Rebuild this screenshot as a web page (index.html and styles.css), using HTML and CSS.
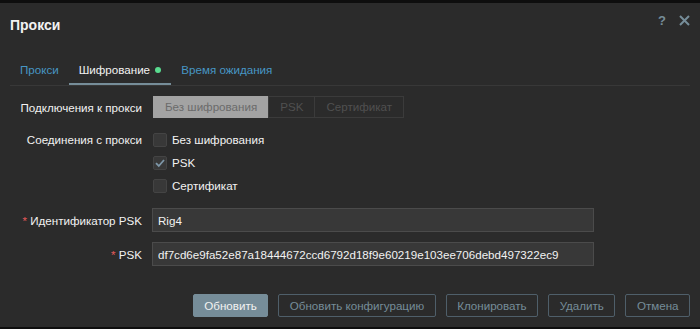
FILE: index.html
```html
<!DOCTYPE html>
<html lang="ru">
<head>
    <meta charset="UTF-8">
    <meta name="viewport" content="width=device-width, initial-scale=1.0">
    <title>Прокси</title>
    <link rel="stylesheet" href="styles.css">
</head>
<body>
    <div class="dialog">
        <div class="dialog-head">
            <h2>Прокси</h2>
            <div class="head-tools">
                <span class="help">?</span>
                <svg class="close" width="11" height="11" viewBox="0 0 11 11">
                    <path d="M1 1 L10 10 M10 1 L1 10" stroke="#768d99" stroke-width="2" fill="none"/>
                </svg>
            </div>
        </div>

        <ul class="tabs">
            <li class="tab">Прокси</li>
            <li class="tab active">Шифрование <span class="dot"></span></li>
            <li class="tab">Время ожидания</li>
        </ul>

        <div class="form">
            <label class="form-label">Подключения к прокси</label>
            <div class="segmented">
                <span class="seg selected">Без шифрования</span>
                <span class="seg">PSK</span>
                <span class="seg">Сертификат</span>
            </div>

            <label class="form-label top">Соединения с прокси</label>
            <ul class="check-list">
                <li><span class="check"></span>Без шифрования</li>
                <li>
                    <span class="check">
                        <svg width="12" height="12" viewBox="0 0 12 12">
                            <path d="M2 6.2 L4.8 9 L10 3" stroke="#7e97a8" stroke-width="1.8" fill="none"/>
                        </svg>
                    </span>PSK
                </li>
                <li><span class="check"></span>Сертификат</li>
            </ul>

            <label class="form-label"><span class="req">*</span> Идентификатор PSK</label>
            <input class="text-input" type="text" value="Rig4">

            <label class="form-label"><span class="req">*</span> PSK</label>
            <input class="text-input" type="text" value="df7cd6e9fa52e87a18444672ccd6792d18f9e60219e103ee706debd497322ec9">
        </div>

        <div class="dialog-foot">
            <button class="btn primary">Обновить</button>
            <button class="btn">Обновить конфигурацию</button>
            <button class="btn">Клонировать</button>
            <button class="btn">Удалить</button>
            <button class="btn">Отмена</button>
        </div>
    </div>
</body>
</html>
```

FILE: styles.css
```css
body {
    margin: 0;
    height: 329px;
    background-color: #0e0e0e;
    font-family: "Liberation Sans", Arial, sans-serif;
    font-size: 11.6px;
    color: #f2f2f2;
    overflow: hidden;
}
.dialog {
    margin-top: 3px;
    height: 324px;
    background-color: #2b2b2b;
    display: flex;
    flex-direction: column;
}
.dialog-head {
    display: flex;
    justify-content: space-between;
    padding: 14px 10px 0;
}
.dialog-head h2 {
    margin: 0;
    font-size: 14px;
    line-height: 16px;
    font-weight: bold;
    color: #f2f2f2;
}
.head-tools {
    display: flex;
    align-items: center;
    gap: 13px;
    margin-top: -5px;
    height: 16px;
}
.help {
    color: #768d99;
    font-size: 13px;
    font-weight: bold;
}
.tabs {
    list-style: none;
    display: flex;
    margin: 21px 10px 0;
    padding: 0;
    border-bottom: 1px solid #383838;
}
.tab {
    padding: 3px 10px 0;
    line-height: 26px;
    border-bottom: 2px solid transparent;
    color: #4796c4;
}
.tab.active {
    color: #f2f2f2;
    border-bottom-color: #768d99;
}
.dot {
    display: inline-block;
    width: 6px;
    height: 6px;
    margin-left: 2px;
    border-radius: 50%;
    background-color: #59db8f;
    vertical-align: 1px;
}
.form {
    display: grid;
    grid-template-columns: 132px 1fr;
    column-gap: 10px;
    row-gap: 10px;
    padding: 10px 10px 0;
    align-items: center;
}
.form-label {
    text-align: right;
    white-space: nowrap;
}
.form-label.top {
    align-self: start;
    line-height: 23px;
}
.req {
    color: #e45959;
}
.segmented {
    display: flex;
    width: max-content;
    margin-left: 1px;
}
.seg {
    height: 20px;
    line-height: 20px;
    padding: 0 11px;
    border: 1px solid #3b3b3b;
    margin-left: -1px;
    color: #505050;
}
.seg:first-child {
    margin-left: 0;
}
.seg.selected {
    background-color: #a3a3a3;
    border-color: #a3a3a3;
    color: #6b6b6b;
}
.check-list {
    list-style: none;
    margin: 0;
    padding: 0 0 1px;
}
.check-list li {
    display: flex;
    align-items: center;
    height: 23px;
}
.check {
    box-sizing: border-box;
    width: 14px;
    height: 14px;
    margin: 0 5px 0 1px;
    border: 1px solid #444;
    border-radius: 2px;
    background-color: #383838;
    display: flex;
    align-items: center;
    justify-content: center;
}
.text-input {
    box-sizing: border-box;
    width: 442px;
    height: 24px;
    padding: 0 5px;
    background-color: #383838;
    border: 1px solid #4b4b4b;
    color: #f2f2f2;
    font-family: inherit;
    font-size: 11.6px;
    outline: none;
}
.dialog-foot {
    margin-top: auto;
    display: flex;
    justify-content: flex-end;
    gap: 10px;
    padding: 0 10px 10px;
}
.btn {
    height: 23px;
    padding: 0 10.5px;
    background-color: transparent;
    border: 1px solid #4f5f6a;
    border-radius: 2px;
    color: #768d99;
    font-family: inherit;
    font-size: 11.6px;
}
.btn.primary {
    background-color: #768d99;
    border-color: #768d99;
    color: #f2f2f2;
}
```
